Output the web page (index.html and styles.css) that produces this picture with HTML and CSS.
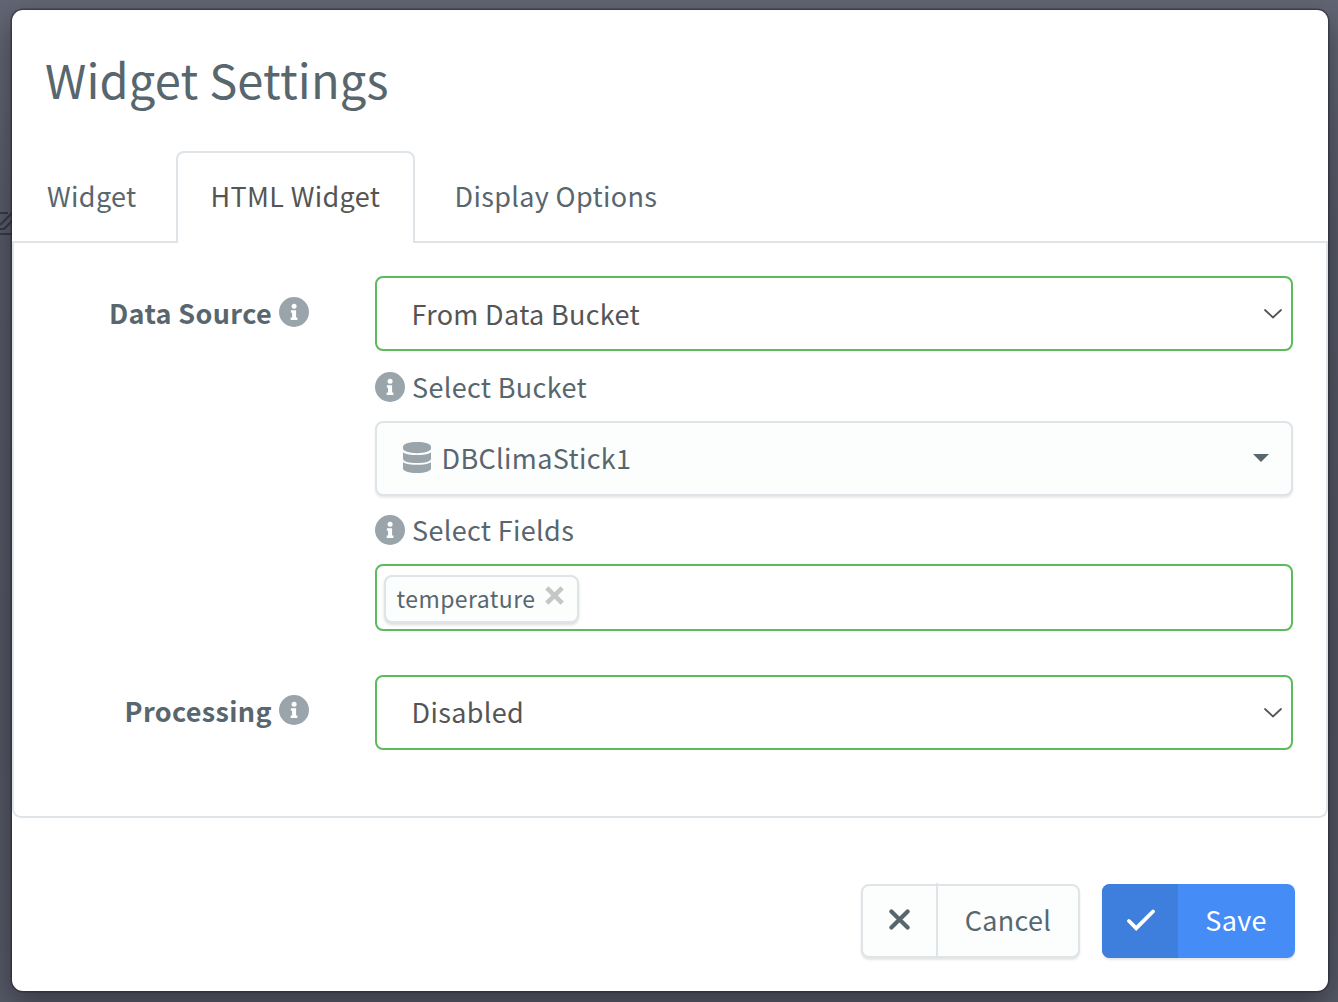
FILE: index.html
```
<!DOCTYPE html>
<html lang="en">
<head>
<meta charset="utf-8">
<title>Widget Settings</title>
<link rel="stylesheet" href="styles.css">
</head>
<body>
<svg class="defs" width="0" height="0" aria-hidden="true">
  <symbol id="info" viewBox="0 0 30 30">
    <circle cx="15" cy="15" r="15" fill="#9aa5ab"/>
    <circle cx="15.1" cy="9.2" r="2.5" fill="#fff"/>
    <path fill="#fff" d="M11.9 13.3h5.2v7.1h1.3v2.5h-6.7v-2.5h1.4v-4.7h-1.2z"/>
  </symbol>
  <symbol id="chevron" viewBox="0 0 20 12">
    <path d="M2 2l8 7.5L18 2" fill="none" stroke="#555" stroke-width="1.8" stroke-linecap="round"/>
  </symbol>
</svg>
<svg class="edit" viewBox="0 0 12 26" aria-hidden="true">
  <path d="M0 3h8M0 24h12M0 19h4l8-8M0 15L12 3" fill="none" stroke="#343948" stroke-width="2"/>
</svg>
<main class="modal">
  <h1 class="title">Widget Settings</h1>
  <nav class="tabs">
    <a class="tab tab-first">Widget</a>
    <a class="tab active">HTML Widget</a>
    <a class="tab tab-last">Display Options</a>
  </nav>
  <section class="panel">
    <div class="row">
      <div class="label"><span>Data Source</span><svg class="info"><use href="#info"/></svg></div>
      <div class="fields">
        <div class="select"><span>From Data Bucket</span><svg class="chevron"><use href="#chevron"/></svg></div>
        <div class="hint"><svg class="info"><use href="#info"/></svg><span>Select Bucket</span></div>
        <div class="dropdown">
          <svg class="database" viewBox="0 0 28 31"><g fill="#9aa5ab"><path d="M0 4.6C0 2 6 0 14 0s14 2 14 4.6v2C28 9.2 22 11.2 14 11.2S0 9.2 0 6.6z"/><path d="M0 10.4c3 2 8 2.6 14 2.6s11-.6 14-2.6v6.3c0 2.5-6 4.4-14 4.4S0 19.2 0 16.7z"/><path d="M0 20.2c3 2 8 2.6 14 2.6s11-.6 14-2.6v6.2c0 2.6-6 4.6-14 4.6S0 29 0 26.4z"/></g></svg>
          <span>DBClimaStick1</span>
          <svg class="caret" viewBox="0 0 16 8"><path d="M0 0h16L8 8z" fill="#58666e"/></svg>
        </div>
        <div class="hint hint-fields"><svg class="info"><use href="#info"/></svg><span>Select Fields</span></div>
        <div class="tags"><span class="tag"><span>temperature</span><svg class="remove" viewBox="0 0 18 18"><path d="M1.7 1.7l14.6 14.6M16.3 1.7L1.7 16.3" stroke="#c6c6c6" stroke-width="4.4"/></svg></span></div>
      </div>
    </div>
    <div class="row">
      <div class="label label-low"><span>Processing</span><svg class="info"><use href="#info"/></svg></div>
      <div class="fields"><div class="select select-low"><span>Disabled</span><svg class="chevron"><use href="#chevron"/></svg></div></div>
    </div>
  </section>
  <footer class="actions">
    <button class="btn cancel"><span class="btn-icon"><svg class="cross" viewBox="0 0 20 20"><path d="M2.3 2.3l15.4 15.4M17.7 2.3L2.3 17.7" stroke="#58666e" stroke-width="4" stroke-linecap="round"/></svg></span><span class="btn-text">Cancel</span></button>
    <button class="btn save"><span class="btn-icon"><svg class="check" viewBox="0 0 28 22"><path d="M2 12l7.2 7.2L26 2.5" fill="none" stroke="#fff" stroke-width="3.8" stroke-linecap="round"/></svg></span><span class="btn-text">Save</span></button>
  </footer>
</main>
</body>
</html>
```
FILE: styles.css
```
* { box-sizing: border-box; }
body {
  margin: 0;
  width: 1338px;
  height: 1002px;
  padding: 10px 10px 11px 12px;
  overflow: hidden;
  background: linear-gradient(#626573, #555866 25%, #525461 70%, #555866);
  color: #58666e;
  font: 27px/40px "Noto Sans CJK SC", sans-serif;
  letter-spacing: .34px;
}
svg { display: block; flex: none; }
span { white-space: nowrap; }
.defs { position: absolute; }
.edit { position: absolute; left: 0; top: 210px; width: 12px; height: 26px; }
.modal {
  position: relative;
  width: 1316px;
  height: 981px;
  background: #fff;
  border-radius: 11px;
  box-shadow: 0 0 0 1.5px rgba(35, 38, 48, .55), 0 10px 30px rgba(0, 0, 0, .38);
}
.title { margin: 0; height: 141px; padding: 34px 0 0 33px; font-size: 47px; font-weight: 400; line-height: 70px; letter-spacing: .18px; }
.tabs { display: flex; height: 92px; border-bottom: 2px solid #dee4e8; }
.tab { height: 92px; padding-top: 25px; }
.tab-first { width: 164px; padding-left: 35px; }
.active { width: 239px; padding: 23px 0 0 32.5px; border: 2px solid #dee4e8; border-bottom: 0; border-radius: 8px 8px 0 0; background: #fff; color: #555; }
.tab-last { padding-left: 39.5px; }
.panel { height: 575px; padding: 33px 33px 0 0; border: solid #dee4e8; border-width: 0 2px 2px; border-radius: 0 0 9px 9px; display: flex; flex-direction: column; gap: 44px; }
.row { display: flex; gap: 66px; }
.label { width: 295px; height: 74px; display: flex; justify-content: flex-end; align-items: center; gap: 7px; font-weight: 700; letter-spacing: .36px; }
.label-low { height: 72px; }
.info { width: 30px; height: 30px; margin-bottom: 2px; }
.fields { flex: 1; }
.select { height: 75px; padding: 0 8px 0 34.5px; border: 2px solid #5cbb5a; border-radius: 8px; display: flex; align-items: center; justify-content: space-between; color: #555; }
.select-low span { margin-bottom: 2px; }
.chevron { width: 20px; height: 12px; }
.hint { height: 70px; display: flex; align-items: center; gap: 7px; padding-top: 1px; }
.hint .info { margin-bottom: 0; }
.hint-fields { height: 68px; padding: 0 0 1px; }
.dropdown { height: 75px; padding: 0 22px 2px 26px; display: flex; align-items: center; gap: 10.5px; border: 2px solid #dee4e8; border-radius: 8px; background: #fcfdfd; box-shadow: 0 2px 2px rgba(90, 90, 90, .13); }
.database { width: 28px; height: 31px; }
.caret { width: 16px; height: 8px; margin-left: auto; }
.tags { height: 67px; padding: 9px 7px; border: 2px solid #5cbb5a; border-radius: 8px; }
.tag { display: flex; width: 195px; height: 48px; padding: 0 0 2px 10.5px; align-items: center; gap: 10px; border: 2px solid #dee4e8; border-radius: 8px; background: #fcfdfd; font-size: 23px; letter-spacing: .42px; box-shadow: 0 2px 3px rgba(90, 90, 90, .2); }
.remove { width: 19px; height: 19px; margin-top: -6px; }
.actions { display: flex; justify-content: flex-end; gap: 22px; padding: 66px 33px 0 0; }
.btn { display: flex; height: 74px; padding: 0; border: 2px solid #dee4e8; border-radius: 8px; background: #fcfdfd; color: inherit; font: inherit; letter-spacing: inherit; box-shadow: 0 2px 2px rgba(90, 90, 90, .15); }
.btn-icon { width: 75px; height: 100%; padding-bottom: 2px; display: flex; align-items: center; justify-content: center; border-right: 2px solid #dee4e8; }
.btn-text { flex: 1; display: flex; align-items: center; justify-content: center; height: 100%; padding-bottom: 2px; }
.cancel { width: 219px; }
.cancel .btn-icon { height: 74px; margin-top: -3px; padding: 0 0 1px; }
.save { width: 193px; border: 0; background: #458cf7; color: #fff; }
.save .btn-icon { width: 76px; padding-left: 2px; border: 0; border-radius: 8px 0 0 8px; background: #3e7edd; }
.save .btn-text { padding-right: 1px; }
.cross { width: 21px; height: 21px; }
.check { width: 28px; height: 22px; }
```
